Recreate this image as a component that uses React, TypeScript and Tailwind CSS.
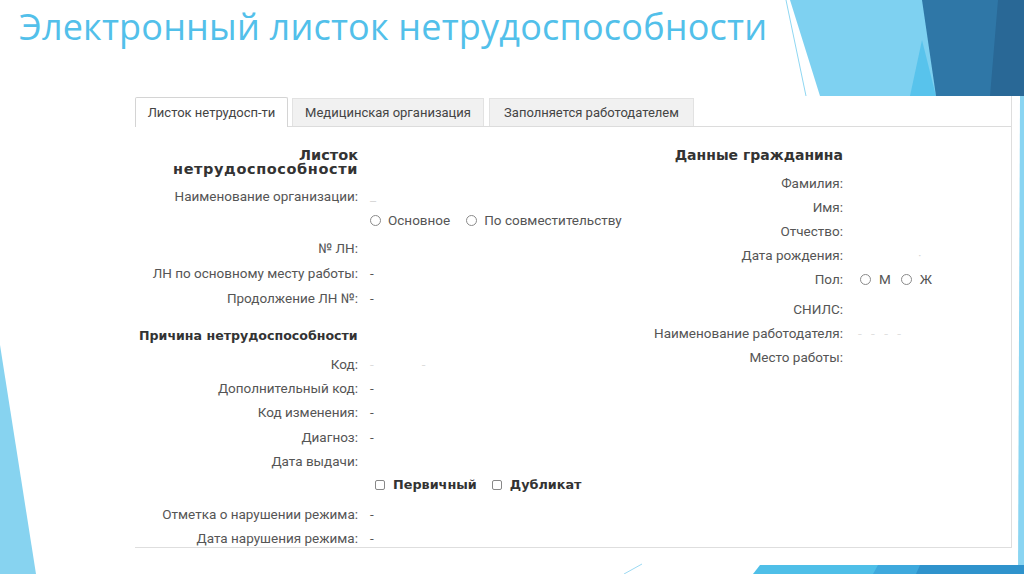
import React from "react";

type Row = { label: string; value?: React.ReactNode; mt?: string };

const LEFT_TOP: Row[] = [
  { label: "Наименование организации:", value: <span className="text-[#d8d8d8]">_</span>, mt: "mt-[8px]" },
  { label: "", value: <RadioPair a="Основное" b="По совместительству" /> },
  { label: "№ ЛН:", mt: "mt-[4px]" },
  { label: "ЛН по основному месту работы:", value: "-", mt: "mt-[1px]" },
  { label: "Продолжение ЛН №:", value: "-", mt: "mt-[1px]" },
];

const LEFT_BOTTOM: Row[] = [
  { label: "Код:", value: <span className="text-[#dcdcdc] tracking-[48px]">--</span>, mt: "mt-[4px]" },
  { label: "Дополнительный код:", value: "-" },
  { label: "Код изменения:", value: "-" },
  { label: "Диагноз:", value: "-", mt: "mt-[1px]" },
  { label: "Дата выдачи:" },
  { label: "", value: <Checks /> },
  { label: "Отметка о нарушении режима:", value: "-", mt: "mt-[5px]" },
  { label: "Дата нарушения режима:", value: "-" },
];

const RIGHT: Row[] = [
  { label: "Фамилия:", mt: "mt-[9px]" },
  { label: "Имя:" },
  { label: "Отчество:" },
  { label: "Дата рождения:", value: <span className="ml-[60px] text-[#d8d8d8]">·</span> },
  { label: "Пол:", value: <RadioPair a="М" b="Ж" tight /> },
  { label: "СНИЛС:", mt: "mt-[6px]" },
  { label: "Наименование работодателя:", value: <span className="text-[#e0e0e0] tracking-[3px]">- - - -</span> },
  { label: "Место работы:" },
];

function Radio() {
  return <span className="inline-block w-[11px] h-[11px] rounded-full border border-[#8a8a8a] bg-white" />;
}

function RadioPair({ a, b, tight }: { a: string; b: string; tight?: boolean }) {
  return (
    <span className={`flex items-center whitespace-nowrap ${tight ? "gap-[8px] ml-[2px]" : "gap-[7px]"}`}>
      <Radio />
      <span>{a}</span>
      <span className={tight ? "ml-[2px] flex" : "ml-[9px] flex"}><Radio /></span>
      <span>{b}</span>
    </span>
  );
}

function Checks() {
  return (
    <span className="flex items-center gap-[8px] whitespace-nowrap font-['DejaVu_Sans',sans-serif] font-bold text-[12.8px] text-[#333] ml-[5px]">
      <span className="inline-block w-[10px] h-[10px] rounded-[2px] border border-[#888]" />
      <span>Первичный</span>
      <span className="inline-block w-[10px] h-[10px] rounded-[2px] border border-[#888] ml-[7px]" />
      <span>Дубликат</span>
    </span>
  );
}

function FieldRow({ row, labelW, gap }: { row: Row; labelW: string; gap: string }) {
  return (
    <div className={`flex items-center h-[24px] whitespace-nowrap ${row.mt ?? ""}`}>
      <div className={`${labelW} text-right shrink-0`}>{row.label}</div>
      <div className={`${gap} shrink-0`}>{row.value}</div>
    </div>
  );
}

function Decor() {
  return (
    <svg className="absolute inset-0 pointer-events-none" width="1024" height="574" viewBox="0 0 1024 574">
      {/* top right */}
      <polygon points="790,0 1024,0 1024,96 820,96" fill="#7ed1f1" />
      <line x1="786" y1="0" x2="806" y2="96" stroke="#8fd7f2" strokeWidth="1" />
      <polygon points="922,40 936,96 910,96" fill="#58c3ec" />
      <polygon points="922,0 1024,0 1024,96 936,96" fill="#2f77a7" />
      <polygon points="998,0 1024,0 1024,96 990,96" fill="#296896" />
      {/* right edge strip */}
      <polygon points="1020,96 1024,96 1024,574 1018,574" fill="#8ad5f2" />
      {/* left triangle */}
      <polygon points="0,345 36,574 0,574" fill="#87d3f0" />
      {/* bottom right */}
      <line x1="624" y1="574" x2="642" y2="564" stroke="#9bd9f2" strokeWidth="1" />
      <polygon points="760,565 1024,565 1024,574 753,574" fill="#4fbfe8" />
      <polygon points="878,565 1024,565 1024,574 873,574" fill="#3ea9dd" />
      <polygon points="920,565 1024,565 1024,574 916,574" fill="#2f93cc" />
    </svg>
  );
}

export default function App() {
  return (
    <div className="relative w-[1024px] h-[574px] overflow-hidden bg-white">
      <Decor />

      <h1 className="relative pl-[19px] pt-[6px] h-[96px] font-['Open_Sans',sans-serif] text-[36px] leading-[42px] text-[#52c0ea] tracking-[0.2px]">
        Электронный листок нетрудоспособности
      </h1>

      {/* embedded screenshot */}
      <div className="relative ml-[135px] w-[877px] h-[452px] bg-white border-r border-b border-[#dedede] overflow-hidden font-['Roboto',sans-serif] text-[13.5px] text-[#555]">
        {/* tabs */}
        <div className="flex items-end h-[31px] pt-[1px] border-b border-[#dcdcdc] text-[13px] text-[#444]">
          <div className="w-[153px] h-[30px] -mb-px flex items-center justify-center bg-white border border-b-0 border-[#d4d4d4] rounded-t-[2px]">
            Листок нетрудосп-ти
          </div>
          <div className="ml-[4px] w-[192px] h-[28px] flex items-center justify-center bg-[#f1f1f1] border border-b-0 border-[#e2e2e2]">
            Медицинская организация
          </div>
          <div className="ml-[5px] w-[205px] h-[28px] flex items-center justify-center bg-[#f1f1f1] border border-b-0 border-[#e2e2e2]">
            Заполняется работодателем
          </div>
        </div>

        <div className="flex">
          {/* left column */}
          <div className="w-[465px] shrink-0">
            <div className="pt-[21px] w-[223px] text-right font-['DejaVu_Sans',sans-serif] font-bold text-[14.5px] leading-[14px] text-[#333]">
              Листок
              <br />
              <span className="tracking-[0.6px]">нетрудоспособности</span>
            </div>
            {LEFT_TOP.map((r, i) => (
              <FieldRow key={i} row={r} labelW="w-[223px]" gap="ml-[12px]" />
            ))}
            <div className="mt-[14px] h-[24px] flex items-center pl-[4px] font-['DejaVu_Sans',sans-serif] font-bold text-[12.6px] text-[#333]">
              Причина нетрудоспособности
            </div>
            {LEFT_BOTTOM.map((r, i) => (
              <FieldRow key={i} row={r} labelW="w-[223px]" gap="ml-[12px]" />
            ))}
          </div>

          {/* right column */}
          <div className="flex-1">
            <div className="pt-[21px] w-[243px] text-right font-['DejaVu_Sans',sans-serif] font-bold text-[14px] leading-[14px] text-[#333]">
              Данные гражданина
            </div>
            {RIGHT.map((r, i) => (
              <FieldRow key={i} row={r} labelW="w-[243px]" gap="ml-[15px]" />
            ))}
          </div>
        </div>
      </div>
    </div>
  );
}
